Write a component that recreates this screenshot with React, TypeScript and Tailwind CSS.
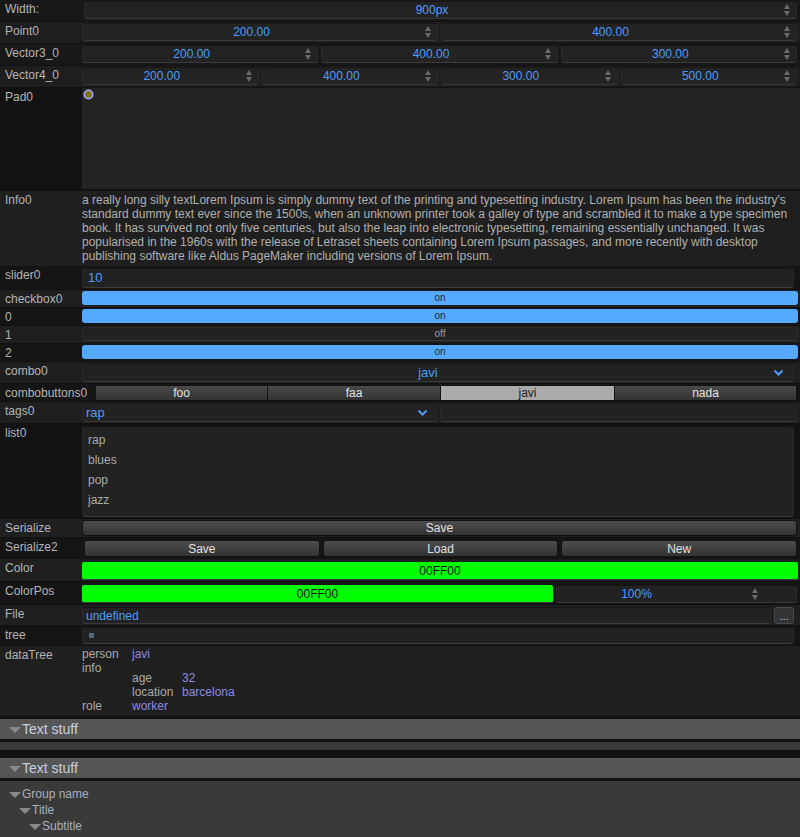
import React from "react";

const BLUE = "text-[#4c9dfc]";

function Spinner() {
  return (
    <svg width="6" height="12" viewBox="0 0 6 12" className="shrink-0 mr-[6px]">
      <polygon points="0,5 3,0 6,5" fill="#6a6a6a" />
      <polygon points="0,7 3,12 6,7" fill="#6a6a6a" />
    </svg>
  );
}

function Num({ v }: { v: string }) {
  return (
    <div className="flex-1 flex items-center h-full rounded-[3px] bg-[#232323] border border-[#2a2a2a] border-t-[#161616] border-b-[#3a3a3a]">
      <span className={`flex-1 text-center pr-[5px] text-[12px] leading-[14px] ${BLUE}`}>{v}</span>
      <Spinner />
    </div>
  );
}

function Chevron() {
  return (
    <svg width="11" height="7" viewBox="0 0 11 7" className="shrink-0">
      <polyline points="1.5,1.5 5.5,5.5 9.5,1.5" fill="none" stroke="#4c9dfc" strokeWidth="2" />
    </svg>
  );
}

function Label({ children, w = "w-[82px]" }: { children: React.ReactNode; w?: string }) {
  return (
    <div className={`${w} shrink-0 pl-[5px] pt-[2px] text-[12px] leading-[14px] text-[#b4b4b4] whitespace-nowrap`}>
      {children}
    </div>
  );
}

function Check({ on }: { on: boolean }) {
  return on ? (
    <div className="flex-1 h-[14px] rounded-[3px] bg-[#55aaff] flex items-center justify-center text-[10px] leading-[12px] text-[#1a2a3a]">
      on
    </div>
  ) : (
    <div className="flex-1 h-[14px] rounded-[3px] bg-[#222] border border-[#2a2a2a] border-b-[#3a3a3a] flex items-center justify-center text-[10px] leading-[12px] text-[#999]">
      off
    </div>
  );
}

function Btn({ children, cls = "" }: { children: React.ReactNode; cls?: string }) {
  return (
    <div
      className={`flex items-center justify-center h-full rounded-[3px] border border-[#111] bg-linear-to-b from-[#4d4d4d] to-[#333] text-[12px] leading-[14px] text-[#e0e0e0] ${cls}`}
    >
      {children}
    </div>
  );
}

function Tri({ cls = "" }: { cls?: string }) {
  return (
    <svg width="12" height="7" viewBox="0 0 12 7" className={`shrink-0 ${cls}`}>
      <polygon points="0,0 12,0 6,6" fill="#8a8a8a" />
    </svg>
  );
}

const box = "rounded-[3px] bg-[#222] border border-[#2a2a2a] border-t-[#161616] border-b-[#3a3a3a]";

export default function App() {
  return (
    <div className="w-[800px] min-h-[837px] bg-[#111] font-['Liberation_Sans',Arial,sans-serif] overflow-hidden">
      {/* Width */}
      <div className="flex h-[22px] bg-[#181818] border-b border-[#111]">
        <Label>Width:</Label>
        <div className="flex-1 flex pt-[1px] pl-[2px] pr-[3px] h-[19px]">
          <Num v="900px" />
        </div>
      </div>
      {/* Point0 */}
      <div className="flex h-[22px] bg-[#1e1e1e] border-b border-[#111]">
        <Label>Point0</Label>
        <div className="flex-1 flex gap-[3px] pt-[1px] pr-[3px] h-[19px]">
          <Num v="200.00" />
          <Num v="400.00" />
        </div>
      </div>
      {/* Vector3 */}
      <div className="flex h-[22px] bg-[#181818] border-b border-[#111]">
        <Label>Vector3_0</Label>
        <div className="flex-1 flex gap-[3px] pt-[1px] pr-[3px] h-[19px]">
          <Num v="200.00" />
          <Num v="400.00" />
          <Num v="300.00" />
        </div>
      </div>
      {/* Vector4 */}
      <div className="flex h-[22px] bg-[#1e1e1e] border-b border-[#111]">
        <Label>Vector4_0</Label>
        <div className="flex-1 flex gap-[3px] pt-[1px] pr-[3px] h-[19px]">
          <Num v="200.00" />
          <Num v="400.00" />
          <Num v="300.00" />
          <Num v="500.00" />
        </div>
      </div>
      {/* Pad0 */}
      <div className="flex h-[103px] bg-[#121212] border-b border-[#111]">
        <Label>Pad0</Label>
        <div className="flex-1 bg-[#232323] h-[101px] pl-[1px] pt-[1px]">
          <svg width="11" height="11" viewBox="0 0 11 11">
            <circle cx="5.5" cy="5.5" r="4.2" fill="#7d7410" stroke="#a9a9ff" strokeWidth="1.6" />
          </svg>
        </div>
      </div>
      {/* Info0 */}
      <div className="flex h-[75px] bg-[#1f1f1f]">
        <Label>Info0</Label>
        <div className="flex-1 pt-[2px] text-[12px] leading-[14px] text-[#b0b0b0] whitespace-nowrap">
          <div>a really long silly textLorem Ipsum is simply dummy text of the printing and typesetting industry. Lorem Ipsum has been the industry's</div>
          <div>standard dummy text ever since the 1500s, when an unknown printer took a galley of type and scrambled it to make a type specimen</div>
          <div>book. It has survived not only five centuries, but also the leap into electronic typesetting, remaining essentially unchanged. It was</div>
          <div>popularised in the 1960s with the release of Letraset sheets containing Lorem Ipsum passages, and more recently with desktop</div>
          <div>publishing software like Aldus PageMaker including versions of Lorem Ipsum.</div>
        </div>
      </div>
      {/* slider0 */}
      <div className="flex h-[24px] bg-[#151515] border-b border-[#111]">
        <Label>slider0</Label>
        <div className="flex-1 pt-[2px] pr-[6px]">
          <div className={`h-[20px] ${box} flex items-center pl-[5px] text-[13px] ${BLUE}`}>10</div>
        </div>
      </div>
      {/* checkbox rows */}
      <div className="flex h-[18px] bg-[#1f1f1f] border-b border-[#111]">
        <Label>checkbox0</Label>
        <div className="flex-1 flex pt-[1px] pr-[2px]">
          <Check on={true} />
        </div>
      </div>
      <div className="flex h-[18px] bg-[#151515] border-b border-[#111]">
        <Label>0</Label>
        <div className="flex-1 flex pt-[1px] pr-[2px]">
          <Check on={true} />
        </div>
      </div>
      <div className="flex h-[18px] bg-[#1f1f1f] border-b border-[#111]">
        <Label>1</Label>
        <div className="flex-1 flex pt-[1px] pr-[2px]">
          <Check on={false} />
        </div>
      </div>
      <div className="flex h-[18px] bg-[#151515] border-b border-[#111]">
        <Label>2</Label>
        <div className="flex-1 flex pt-[1px] pr-[2px]">
          <Check on={true} />
        </div>
      </div>
      {/* combo0 */}
      <div className="flex h-[22px] bg-[#1f1f1f] border-b border-[#111]">
        <Label>combo0</Label>
        <div className="flex-1 pt-[1px] pr-[6px]">
          <div className={`h-[19px] ${box} flex items-center pr-[9px]`}>
            <span className={`flex-1 text-center text-[13px] leading-[15px] ${BLUE}`}>javi</span>
            <Chevron />
          </div>
        </div>
      </div>
      {/* combobuttons0 */}
      <div className="flex h-[18px] bg-[#151515] border-b border-[#111]">
        <Label w="w-[95px]">combobuttons0</Label>
        <div className="flex-1 flex pt-[1px] pr-[3px] h-[17px]">
          <div className="w-[173px] h-full flex items-center justify-center border border-[#111] bg-linear-to-b from-[#4a4a4a] to-[#333] text-[12px] text-[#e4e4e4]">foo</div>
          <div className="w-[173px] h-full flex items-center justify-center border border-[#111] border-l-0 bg-linear-to-b from-[#4a4a4a] to-[#333] text-[12px] text-[#e4e4e4]">faa</div>
          <div className="w-[174px] h-full flex items-center justify-center border border-[#111] border-l-0 bg-[#aaa] text-[12px] text-[#222]">javi</div>
          <div className="flex-1 h-full flex items-center justify-center border border-[#111] border-l-0 bg-linear-to-b from-[#4a4a4a] to-[#333] text-[12px] text-[#e4e4e4]">nada</div>
        </div>
      </div>
      {/* tags0 */}
      <div className="flex h-[22px] bg-[#1f1f1f] border-b border-[#111]">
        <Label>tags0</Label>
        <div className="flex-1 flex gap-[3px] pt-[1px] pr-[3px] h-[20px]">
          <div className={`w-[355px] shrink-0 ${box} flex items-center pl-[3px] pr-[8px]`}>
            <span className={`flex-1 text-[13px] leading-[15px] ${BLUE}`}>rap</span>
            <Chevron />
          </div>
          <div className={`flex-1 ${box}`}></div>
        </div>
      </div>
      {/* list0 */}
      <div className="flex h-[95px] bg-[#131313] border-b border-[#111]">
        <Label>list0</Label>
        <div className="flex-1 pt-[2px] pr-[6px]">
          <div className={`h-[91px] ${box} pl-[5px] pt-[3px] text-[12px] leading-[20px] text-[#aaa]`}>
            <div>rap</div>
            <div>blues</div>
            <div>pop</div>
            <div>jazz</div>
          </div>
        </div>
      </div>
      {/* Serialize */}
      <div className="flex h-[19px] bg-[#1f1f1f] border-b border-[#111]">
        <Label>Serialize</Label>
        <div className="flex-1 flex pt-[1px] pr-[3px] h-[17px]">
          <Btn cls="flex-1">Save</Btn>
        </div>
      </div>
      {/* Serialize2 */}
      <div className="flex h-[21px] bg-[#151515] border-b border-[#111]">
        <Label>Serialize2</Label>
        <div className="flex-1 flex gap-[3px] pt-[2px] pl-[2px] pr-[3px] h-[19px]">
          <Btn cls="flex-1">Save</Btn>
          <Btn cls="flex-1">Load</Btn>
          <Btn cls="flex-1">New</Btn>
        </div>
      </div>
      {/* Color */}
      <div className="flex h-[23px] bg-[#1f1f1f] border-b border-[#111]">
        <Label>Color</Label>
        <div className="flex-1 flex pt-[3px] pr-[2px] h-[21px]">
          <div className="flex-1 rounded-[2px] bg-[#00ff00] border-b border-[#3a3a3a] flex items-center justify-center text-[12px] text-[#111]">00FF00</div>
        </div>
      </div>
      {/* ColorPos */}
      <div className="flex h-[23px] bg-[#151515] border-b border-[#111]">
        <Label>ColorPos</Label>
        <div className="flex-1 flex gap-[3px] pt-[3px] pr-[3px] h-[21px]">
          <div className="w-[471px] rounded-[2px] bg-[#00ff00] border-b border-[#3a3a3a] flex items-center justify-center text-[12px] text-[#111]">00FF00</div>
          <div className={`flex-1 ${box} flex items-center`}>
            <span className={`flex-1 text-center pr-[36px] text-[12px] ${BLUE}`}>100%</span>
            <svg width="6" height="12" viewBox="0 0 6 12" className="shrink-0 mr-[38px]">
              <polygon points="0,5 3,0 6,5" fill="#6a6a6a" />
              <polygon points="0,7 3,12 6,7" fill="#6a6a6a" />
            </svg>
          </div>
        </div>
      </div>
      {/* File */}
      <div className="flex h-[21px] bg-[#1f1f1f] border-b border-[#111]">
        <Label>File</Label>
        <div className="flex-1 flex gap-[3px] pt-[2px] pr-[6px] h-[19px]">
          <div className={`flex-1 ${box} flex items-center pl-[3px] text-[12px] ${BLUE}`}>undefined</div>
          <div className="w-[20px] rounded-[3px] bg-[#333] border border-[#4a4a4a] flex items-end justify-center text-[11px] leading-[13px] text-[#ccc]">...</div>
        </div>
      </div>
      {/* tree */}
      <div className="flex h-[20px] bg-[#151515] border-b border-[#111]">
        <Label>tree</Label>
        <div className="flex-1 pt-[1px] pr-[6px]">
          <div className={`h-[17px] ${box} flex items-center pl-[6px]`}>
            <div className="w-[5px] h-[5px] bg-[#4d6a80]"></div>
          </div>
        </div>
      </div>
      {/* dataTree */}
      <div className="flex h-[70px] bg-[#1f1f1f]">
        <Label>dataTree</Label>
        <div className="flex-1 pt-[1px] text-[12px] leading-[14px] text-[#aaa]">
          <div className="flex">
            <div className="w-[50px]">person</div>
            <div className="text-[#8a8ae6]">javi</div>
          </div>
          <div>info</div>
          <div className="-mt-[4px] pl-[50px]">
            <div className="flex">
              <div className="w-[50px]">age</div>
              <div className="text-[#8a8ae6]">32</div>
            </div>
            <div className="flex">
              <div className="w-[50px]">location</div>
              <div className="text-[#8a8ae6]">barcelona</div>
            </div>
          </div>
          <div className="flex">
            <div className="w-[50px]">role</div>
            <div className="text-[#8a8ae6]">worker</div>
          </div>
        </div>
      </div>
      {/* Sections */}
      <div className="h-[3px]"></div>
      <div className="h-[20px] bg-[#555] flex items-center pl-[9px] gap-[1px]">
        <Tri cls="mt-[2px]" />
        <span className="text-[14px] leading-[16px] text-[#c8d0e0]">Text stuff</span>
      </div>
      <div className="h-[3px]"></div>
      <div className="h-[8px] bg-[#3a3a3a]"></div>
      <div className="h-[8px]"></div>
      <div className="h-[20px] bg-[#555] flex items-center pl-[9px] gap-[1px]">
        <Tri cls="mt-[2px]" />
        <span className="text-[14px] leading-[16px] text-[#c8d0e0]">Text stuff</span>
      </div>
      <div className="h-[3px]"></div>
      <div className="h-[56px] bg-[#3a3a3a] pt-[5px] text-[12px] leading-[16px] text-[#aab0bc]">
        <div className="flex items-center pl-[9px] gap-[1px]">
          <Tri cls="mt-[3px]" />
          <span>Group name</span>
        </div>
        <div className="flex items-center pl-[19px] gap-[1px]">
          <Tri cls="mt-[3px]" />
          <span>Title</span>
        </div>
        <div className="flex items-center pl-[29px] gap-[1px]">
          <Tri cls="mt-[3px]" />
          <span>Subtitle</span>
        </div>
      </div>
    </div>
  );
}
